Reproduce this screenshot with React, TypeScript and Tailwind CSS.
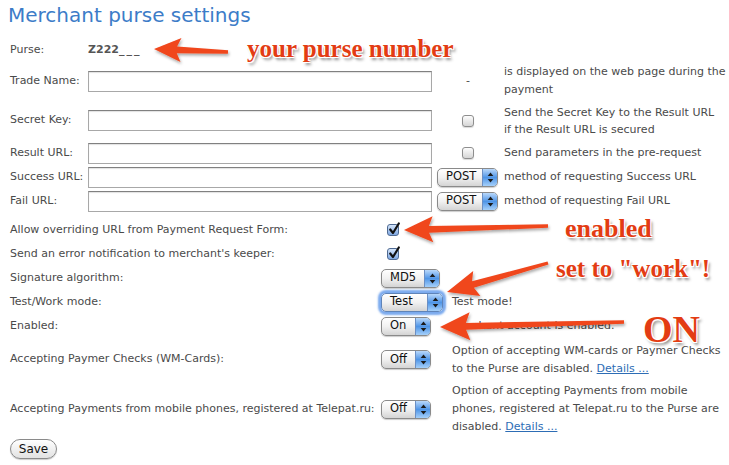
import React from "react";

function arrowPoints(tx: number, ty: number, sx: number, sy: number, headLen = 26, headHalf = 13, shHead = 3.4, shTail = 1.7) {
  const dx = sx - tx, dy = sy - ty;
  const L = Math.hypot(dx, dy);
  const ux = dx / L, uy = dy / L;
  const nx = -uy, ny = ux;
  const bx = tx + ux * headLen, by = ty + uy * headLen;
  const p = (x: number, y: number) => `${x.toFixed(1)},${y.toFixed(1)}`;
  return [
    p(tx, ty),
    p(bx + nx * headHalf + ux * 3, by + ny * headHalf + uy * 3),
    p(bx + nx * shHead - ux * 1, by + ny * shHead - uy * 1),
    p(sx + nx * shTail, sy + ny * shTail),
    p(sx - nx * shTail, sy - ny * shTail),
    p(bx - nx * shHead - ux * 1, by - ny * shHead - uy * 1),
    p(bx - nx * headHalf + ux * 3, by - ny * headHalf + uy * 3),
  ].join(" ");
}

function Arrows() {
  return (
    <svg className="absolute left-0 top-0 pointer-events-none" width={729} height={465} viewBox="0 0 729 465">
      <defs>
        <filter id="ds" x="-20%" y="-50%" width="140%" height="200%">
          <feDropShadow dx="1" dy="2" stdDeviation="1.5" floodColor="#000" floodOpacity="0.35" />
        </filter>
      </defs>
      <g fill="#f0461c" filter="url(#ds)">
        <polygon points={arrowPoints(154, 49, 228, 52, 24, 12)} />
        <polygon points={arrowPoints(404, 230, 548, 226, 26, 13)} />
        <polygon points={arrowPoints(447, 292, 548, 263, 28, 13)} />
        <polygon points={arrowPoints(440, 327, 624, 322, 27, 14)} />
      </g>
    </svg>
  );
}

function Input() {
  return <div className="w-[344px] h-[21px] shrink-0 border border-[#a8a8a8] border-t-[#808080] bg-white shadow-[inset_0_1px_1px_rgba(0,0,0,0.12)]" />;
}

function Checkbox() {
  return <div className="w-[12px] h-[12px] rounded-[3px] border border-[#8e8e8e] bg-gradient-to-b from-[#fdfdfd] to-[#d6d6d6] shadow-[0_1px_1px_rgba(0,0,0,0.15)]" />;
}

function CheckedBox() {
  return (
    <div className="relative w-[12px] h-[12px] rounded-[3px] border border-[#4f6a92] bg-gradient-to-b from-[#d5e5fa] to-[#7fa8e2]">
      <svg className="absolute left-[0px] top-[-3px]" width="13" height="14" viewBox="0 0 13 14">
        <path d="M2.2 7.5 L5 11 L10.8 1.5" fill="none" stroke="#111" strokeWidth="2.2" strokeLinecap="round" strokeLinejoin="round" />
      </svg>
    </div>
  );
}

function Select({ label, cls, focus }: { label: string; cls: string; focus?: boolean }) {
  return (
    <div
      className={`${cls} h-[19px] flex items-stretch rounded-[5px] border bg-gradient-to-b from-[#ffffff] via-[#f1f1f1] to-[#d4d4d4] ${
        focus
          ? "border-[#5f84b8] shadow-[0_0_2px_3px_rgba(100,155,235,0.85)]"
          : "border-[#8a8a8a] shadow-[0_1px_1px_rgba(0,0,0,0.2)]"
      }`}
    >
      <div className="flex-1 flex items-center pl-[8px] text-[11.5px] text-[#111] leading-none">{label}</div>
      <div className="w-[15px] rounded-r-[4px] border-l border-[#6b8fc4] bg-gradient-to-b from-[#b9d8fa] via-[#4f95e6] to-[#a5d0fa] flex items-center justify-center">
        <svg width="7" height="11" viewBox="0 0 7 11">
          <path d="M3.5 0.5 L6.3 4 L0.7 4 Z" fill="#1a1a1a" />
          <path d="M3.5 10.5 L6.3 7 L0.7 7 Z" fill="#1a1a1a" />
        </svg>
      </div>
    </div>
  );
}

const ann =
  "absolute font-['Liberation_Serif',serif] font-bold leading-none text-[#e33c13] whitespace-nowrap [text-shadow:-1px_-1px_0_#fff,1px_-1px_0_#fff,-1px_1px_0_#fff,1px_1px_0_#fff,0_-1px_0_#fff,0_1px_0_#fff,2px_3px_3px_rgba(0,0,0,0.45)]";

export default function App() {
  return (
    <div className="relative w-[729px] h-[465px] overflow-hidden bg-white text-[11px] text-[#4a4a4a] font-['DejaVu_Sans',Verdana,sans-serif]">
      <h1 className="h-[38px] pl-[8px] pt-[3px] text-[20px] leading-[24px] text-[#3c7cc8] font-normal">Merchant purse settings</h1>

      <div className="pl-[10px]">
        {/* Purse */}
        <div className="flex items-center h-[24px]">
          <div className="w-[78px] shrink-0">Purse:</div>
          <div className="font-bold text-[#555]">
            Z222<span className="tracking-[2px]">___</span>
          </div>
        </div>
        {/* Trade Name */}
        <div className="flex items-center h-[38px]">
          <div className="w-[78px] shrink-0">Trade Name:</div>
          <Input />
          <div className="w-[72px] shrink-0 flex justify-center">-</div>
          <div className="w-[225px] leading-[18px]">is displayed on the web page during the payment</div>
        </div>
        {/* Secret Key */}
        <div className="flex items-center h-[41px]">
          <div className="w-[78px] shrink-0">Secret Key:</div>
          <Input />
          <div className="w-[72px] shrink-0 flex justify-center">
            <Checkbox />
          </div>
          <div className="w-[212px] leading-[17px]">Send the Secret Key to the Result URL if the Result URL is secured</div>
        </div>
        {/* Result URL */}
        <div className="flex items-center h-[24px]">
          <div className="w-[78px] shrink-0">Result URL:</div>
          <Input />
          <div className="w-[72px] shrink-0 flex justify-center">
            <Checkbox />
          </div>
          <div className="w-[225px]">Send parameters in the pre-request</div>
        </div>
        {/* Success URL */}
        <div className="flex items-center h-[24px]">
          <div className="w-[78px] shrink-0">Success URL:</div>
          <Input />
          <div className="w-[72px] shrink-0 flex pl-[5px]">
            <Select label="POST" cls="w-[61px]" />
          </div>
          <div className="w-[225px]">method of requesting Success URL</div>
        </div>
        {/* Fail URL */}
        <div className="flex items-center h-[24px]">
          <div className="w-[78px] shrink-0">Fail URL:</div>
          <Input />
          <div className="w-[72px] shrink-0 flex pl-[5px]">
            <Select label="POST" cls="w-[61px]" />
          </div>
          <div className="w-[225px]">method of requesting Fail URL</div>
        </div>

        <div className="mt-[5px]">
          <div className="flex items-center h-[24px]">
            <div className="w-[371px] shrink-0">Allow overriding URL from Payment Request Form:</div>
            <div className="w-[71px] shrink-0 pl-[6px]">
              <CheckedBox />
            </div>
          </div>
          <div className="flex items-center h-[24px]">
            <div className="w-[371px] shrink-0">Send an error notification to merchant's keeper:</div>
            <div className="w-[71px] shrink-0 pl-[6px]">
              <CheckedBox />
            </div>
          </div>
          <div className="flex items-center h-[24px]">
            <div className="w-[371px] shrink-0">Signature algorithm:</div>
            <div className="w-[71px] shrink-0">
              <Select label="MD5" cls="w-[59px]" />
            </div>
          </div>
          <div className="flex items-center h-[24px]">
            <div className="w-[371px] shrink-0">Test/Work mode:</div>
            <div className="w-[71px] shrink-0">
              <Select label="Test" cls="w-[62px]" focus />
            </div>
            <div>Test mode!</div>
          </div>
          <div className="flex items-center h-[24px]">
            <div className="w-[371px] shrink-0">Enabled:</div>
            <div className="w-[71px] shrink-0">
              <Select label="On" cls="w-[50px]" />
            </div>
            <div>Merchant account is enabled.</div>
          </div>
          <div className="flex items-center h-[37px] mt-[3px]">
            <div className="w-[371px] shrink-0">Accepting Paymer Checks (WM-Cards):</div>
            <div className="w-[71px] shrink-0">
              <Select label="Off" cls="w-[50px]" />
            </div>
            <div className="w-[277px] leading-[18px]">
              Option of accepting WM-cards or Paymer Checks to the Purse are disabled.{" "}
              <span className="text-[#2d6db5] underline">Details ...</span>
            </div>
          </div>
          <div className="flex items-center h-[54px] mt-[4px]">
            <div className="w-[371px] shrink-0">Accepting Payments from mobile phones, registered at Telepat.ru:</div>
            <div className="w-[71px] shrink-0">
              <Select label="Off" cls="w-[50px]" />
            </div>
            <div className="w-[272px] leading-[18px]">
              Option of accepting Payments from mobile phones, registered at Telepat.ru to the Purse are disabled.{" "}
              <span className="text-[#2d6db5] underline">Details ...</span>
            </div>
          </div>
          <div className="mt-[3px]">
            <button className="h-[20px] w-[47px] rounded-full border border-[#8a8a8a] bg-gradient-to-b from-white to-[#e2e2e2] text-[12px] text-[#111] leading-none shadow-[0_1px_1px_rgba(0,0,0,0.2)]">
              Save
            </button>
          </div>
        </div>
      </div>

      <Arrows />
      <div className={`${ann} left-[247px] top-[36px] text-[25px]`}>your purse number</div>
      <div className={`${ann} left-[565px] top-[216px] text-[26px]`}>enabled</div>
      <div className={`${ann} left-[556px] top-[256px] text-[25px]`}>set to "work"!</div>
      <div className={`${ann} left-[643px] top-[310px] text-[38px]`}>ON</div>
    </div>
  );
}
